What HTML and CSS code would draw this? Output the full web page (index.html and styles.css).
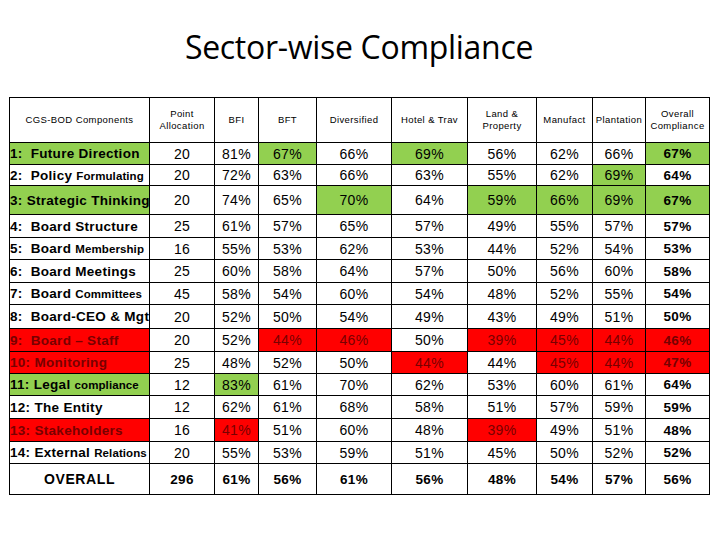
FILE: index.html
```html
<!DOCTYPE html>
<html>
<head>
<meta charset="utf-8">
<link rel="stylesheet" href="styles.css">
</head>
<body>
<div class="page">
  <h1 class="title">Sector-wise Compliance</h1>
  <table class="grid">
    <colgroup>
      <col class="c-label"><col class="c-pts"><col class="c-bfi"><col class="c-bft"><col class="c-div"><col class="c-hot"><col class="c-land"><col class="c-man"><col class="c-pla"><col class="c-ovr">
    </colgroup>
    <thead>
      <tr class="h45">
        <th>CGS-BOD Components</th>
        <th>Point<br>Allocation</th>
        <th>BFI</th>
        <th>BFT</th>
        <th>Diversified</th>
        <th>Hotel &amp; Trav</th>
        <th>Land &amp;<br>Property</th>
        <th>Manufact</th>
        <th>Plantation</th>
        <th>Overall<br>Compliance</th>
      </tr>
    </thead>
    <tbody>
      <tr class="h22">
        <td class="lbl g">1:&nbsp; Future Direction</td><td>20</td><td>81%</td><td class="g">67%</td><td>66%</td><td class="g">69%</td><td>56%</td><td>62%</td><td>66%</td><td class="ov g">67%</td>
      </tr>
      <tr class="h21">
        <td class="lbl">2:&nbsp; Policy <span class="sm">Formulating</span></td><td>20</td><td>72%</td><td>63%</td><td>66%</td><td>63%</td><td>55%</td><td>62%</td><td class="g">69%</td><td class="ov">64%</td>
      </tr>
      <tr class="h29">
        <td class="lbl g">3: Strategic Thinking</td><td>20</td><td>74%</td><td>65%</td><td class="g">70%</td><td>64%</td><td class="g">59%</td><td class="g">66%</td><td class="g">69%</td><td class="ov g">67%</td>
      </tr>
      <tr class="h23">
        <td class="lbl">4:&nbsp; Board Structure</td><td>25</td><td>61%</td><td>57%</td><td>65%</td><td>57%</td><td>49%</td><td>55%</td><td>57%</td><td class="ov">57%</td>
      </tr>
      <tr class="h22">
        <td class="lbl">5:&nbsp; Board <span class="sm">Membership</span></td><td>16</td><td>55%</td><td>53%</td><td>62%</td><td>53%</td><td>44%</td><td>52%</td><td>54%</td><td class="ov">53%</td>
      </tr>
      <tr class="h23">
        <td class="lbl">6:&nbsp; Board Meetings</td><td>25</td><td>60%</td><td>58%</td><td>64%</td><td>57%</td><td>50%</td><td>56%</td><td>60%</td><td class="ov">58%</td>
      </tr>
      <tr class="h22">
        <td class="lbl">7:&nbsp; Board <span class="sm">Committees</span></td><td>45</td><td>58%</td><td>54%</td><td>60%</td><td>54%</td><td>48%</td><td>52%</td><td>55%</td><td class="ov">54%</td>
      </tr>
      <tr class="h24">
        <td class="lbl">8:&nbsp; Board-CEO &amp; Mgt</td><td>20</td><td>52%</td><td>50%</td><td>54%</td><td>49%</td><td>43%</td><td>49%</td><td>51%</td><td class="ov">50%</td>
      </tr>
      <tr class="h23">
        <td class="lbl r">9:&nbsp; Board – Staff</td><td>20</td><td>52%</td><td class="r">44%</td><td class="r">46%</td><td>50%</td><td class="r">39%</td><td class="r">45%</td><td class="r">44%</td><td class="ov r">46%</td>
      </tr>
      <tr class="h22">
        <td class="lbl r">10: Monitoring</td><td>25</td><td>48%</td><td>52%</td><td>50%</td><td class="r">44%</td><td>44%</td><td class="r">45%</td><td class="r">44%</td><td class="ov r">47%</td>
      </tr>
      <tr class="h22">
        <td class="lbl g">11: Legal <span class="sm">compliance</span></td><td>12</td><td class="g">83%</td><td>61%</td><td>70%</td><td>62%</td><td>53%</td><td>60%</td><td>61%</td><td class="ov">64%</td>
      </tr>
      <tr class="h23">
        <td class="lbl">12: The Entity</td><td>12</td><td>62%</td><td>61%</td><td>68%</td><td>58%</td><td>51%</td><td>57%</td><td>59%</td><td class="ov">59%</td>
      </tr>
      <tr class="h23">
        <td class="lbl r">13: Stakeholders</td><td>16</td><td class="r">41%</td><td>51%</td><td>60%</td><td>48%</td><td class="r">39%</td><td>49%</td><td>51%</td><td class="ov">48%</td>
      </tr>
      <tr class="h22">
        <td class="lbl">14: External <span class="sm">Relations</span></td><td>20</td><td>55%</td><td>53%</td><td>59%</td><td>51%</td><td>45%</td><td>50%</td><td>52%</td><td class="ov">52%</td>
      </tr>
      <tr class="h31 total">
        <td class="tot-lbl">OVERALL</td><td>296</td><td>61%</td><td>56%</td><td>61%</td><td>56%</td><td>48%</td><td>54%</td><td>57%</td><td>56%</td>
      </tr>
    </tbody>
  </table>
</div>
</body>
</html>
```
FILE: styles.css
```css
html, body {
  margin: 0;
  padding: 0;
  background: #ffffff;
}
.page {
  width: 720px;
  height: 540px;
  padding: 0 0 0 9px;
  box-sizing: border-box;
  font-family: "Liberation Sans", Arial, sans-serif;
  color: #000;
}
.title {
  margin: 0;
  height: 97px;
  padding-top: 26px;
  box-sizing: border-box;
  font-family: "Open Sans", "Liberation Sans", sans-serif;
  font-weight: 400;
  font-size: 32px;
  line-height: 42px;
  text-align: center;
  width: 700px;
  letter-spacing: -0.3px;
}
.grid {
  border-collapse: collapse;
  table-layout: fixed;
  width: 700px;
}
.c-label { width: 140px; }
.c-pts { width: 65px; }
.c-bfi { width: 44px; }
.c-bft { width: 58px; }
.c-div { width: 75px; }
.c-hot { width: 76px; }
.c-land { width: 69px; }
.c-man { width: 56px; }
.c-pla { width: 53px; }
.c-ovr { width: 64px; }
.grid th, .grid td {
  border: 1px solid #000;
  padding: 0;
  text-align: center;
  vertical-align: middle;
  overflow: hidden;
  white-space: nowrap;
}
.grid th {
  font-weight: 400;
  font-size: 9.5px;
  line-height: 12px;
  letter-spacing: 0.4px;
}
.grid td {
  font-size: 14px;
  letter-spacing: 0.3px;
}
.h45 { height: 45px; }
.h21 { height: 21px; }
.h22 { height: 22px; }
.h23 { height: 23px; }
.h24 { height: 24px; }
.h29 { height: 29px; }
.h31 { height: 31px; }
.grid td.lbl {
  text-align: left;
  font-weight: 700;
  font-size: 13.5px;
  letter-spacing: 0.3px;
  padding-left: 0;
}
.sm {
  font-size: 11.5px;
  letter-spacing: 0.1px;
}
.grid td.ov {
  font-weight: 700;
  font-size: 13.5px;
}
.g { background: #92d050; }
.r { background: #ff0000; color: #780000; }
.total td {
  font-weight: 700;
  font-size: 13.5px;
}
.grid td.tot-lbl {
  font-size: 14px;
  letter-spacing: 0.6px;
}
```
